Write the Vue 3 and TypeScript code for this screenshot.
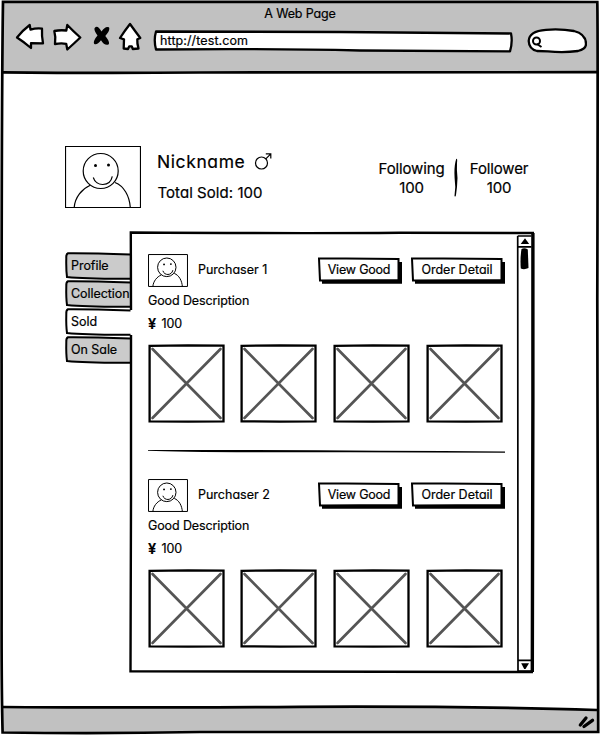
<script setup lang="ts">
interface Tab {
  label: string
  active: boolean
}

interface Purchase {
  id: number
  name: string
  description: string
  price: number
}

const tabs: Tab[] = [
  { label: 'Profile', active: false },
  { label: 'Collection', active: false },
  { label: 'Sold', active: true },
  { label: 'On Sale', active: false },
]

const purchases: Purchase[] = [
  { id: 1, name: 'Purchaser 1', description: 'Good Description', price: 100 },
  { id: 2, name: 'Purchaser 2', description: 'Good Description', price: 100 },
]
</script>

<template>
  <div class="window">
    <header class="chrome">
      <div class="title">A Web Page</div>
      <div class="toolbar">
        <svg class="ink back" width="30" height="30" viewBox="15 22 30 30">
          <path d="M17 37.5 Q23 30 29.7 25 L30.5 29.6 Q36 28 42 28.6 Q41.6 36 43 43.3 L31 43.2 L31 48 Q24 42 17 37.5Z" />
        </svg>
        <svg class="ink forward" width="30" height="30" viewBox="52 22 30 30">
          <path d="M54.3 31 Q60 29.8 66.3 30.5 L67.3 25 Q73 31 80.3 37.5 Q74 43.5 67.3 49.5 L66.2 43.8 Q61 43 55 44 Q56 37 54.3 31Z" />
        </svg>
        <svg class="stop" width="18" height="22" viewBox="93 25 18 22">
          <path d="M94.700 28 Q97.500 24.500 101.500 31.500 Q105.500 25.500 109 27.300 Q110.500 30.500 105.300 36 Q110.500 42.500 108.500 44.500 Q104.500 46 101 40.300 Q97 45.500 94.300 44 Q92.500 41.500 97.500 35.500 Q93.500 30 94.700 28Z" />
        </svg>
        <svg class="ink home" width="24" height="30" viewBox="118 22 24 30">
          <path d="M130 24 Q135 31 140.300 38 L137.300 39.300 Q137 43 138.500 48.500 L132.800 49 L131.800 46.300 H129.300 L128 49 L123.700 48.500 L124 39.300 L120 38 Q124.500 31 130 24Z" />
        </svg>
        <div class="url">
          <svg class="backing" width="360" height="24" viewBox="153 29 360 24">
            <path class="outline" d="M156 31.500 Q280 31.500 340 32 Q430 32.500 511 33.500 Q512.800 42 510 51.300 Q420 51 360 50.500 Q270 48.500 156 49.500 Q153.500 40 156 31.500Z" />
          </svg>
          <span class="url-text">http://test.com</span>
        </div>
        <svg class="search" width="60" height="26" viewBox="527 28 60 26">
          <path class="outline" d="M528.700 41 Q529 31 546 29.800 Q561 28.700 574 31 Q586 34 586 44 Q586 49 578 51 Q563 53 548 51.300 L537 51 Q529 49 528.700 41Z" />
          <circle cx="536.500" cy="41" r="3.500" class="lens" />
          <path d="M537 44 L541.500 47" class="lens" />
        </svg>
      </div>
    </header>

    <main class="page">
      <section class="profile">
        <svg class="avatar large" viewBox="0 0 76 62">
          <rect x="0.500" y="0.500" width="75" height="61" />
          <circle cx="35.700" cy="25" r="17.500" />
          <path d="M28.300 31.500 C31 41 45 41 47.300 30.300" />
          <path d="M9.200 61.500 C10 51 17 43 25.200 39.300 M50 36.500 C59 40 64.500 50 65.300 61.500" />
          <circle class="eye" cx="30.500" cy="19.500" r="1.500" />
          <circle class="eye" cx="43.500" cy="19" r="1.500" />
        </svg>
        <div class="identity">
          <div class="nick">
            <span>Nickname</span>
            <svg width="18" height="18" viewBox="255 152 18 18">
              <circle cx="262.500" cy="163" r="6" />
              <path d="M266.800 158.800 L271.300 154.300 M266.800 153.800 H271.800 V158.600" />
            </svg>
          </div>
          <div class="total">Total Sold: 100</div>
        </div>
        <div class="stats">
          <div class="stat following"><span>Following</span><span class="num">100</span></div>
          <svg class="bar" width="6" height="40" viewBox="0 0 6 40">
            <path d="M3.200 1 Q4.600 0 4 5 Q3.600 12 4.500 20 Q4.200 30 3 37 Q2.500 39.500 1.500 38 Q3 29 1.600 20 Q1 10 2.400 4Z" />
          </svg>
          <div class="stat follower"><span>Follower</span><span class="num">100</span></div>
        </div>
      </section>

      <section class="content">
        <nav class="tabs">
          <div v-for="tab in tabs" :key="tab.label" class="tab" :class="{ active: tab.active }">
            <svg class="backing" width="66" height="28" viewBox="65 252 66 28">
              <path class="tab-fill" d="M66.500 255 L68 253.500 L130.500 254.500 V279 Q90 278.500 67.500 277 Q66 266 66.500 255Z" />
              <path class="tab-line" d="M130.500 254.500 Q90 253 68 253.200 Q66 254 66.300 258 Q66 270 67 277 Q85 279 130.500 278.800" />
            </svg>
            <span class="tab-text">{{ tab.label }}</span>
          </div>
        </nav>

        <div class="panel">
          <svg class="backing" width="407" height="442" viewBox="129 231 407 442">
            <path class="panel-line" d="M131 310 L130.800 232.500 Q300 233.500 400 232.800 L534 233" />
            <path class="panel-line" d="M131 335 V500 L130.500 671.300 Q330 672.500 533 672" />
          </svg>
          <div class="list">
            <template v-for="(item, index) in purchases" :key="item.id">
              <svg v-if="index > 0" class="rule" width="357" height="56" viewBox="148 423 357 56">
                <path d="M148 450 L250 450 Q380 450.500 505 451.600 V452.800 L350 452.300 Q190 452.500 148 450.700Z" />
              </svg>
              <article class="entry">
                <div class="entry-head">
                  <svg class="avatar small" viewBox="0 0 76 62" preserveAspectRatio="none">
                    <rect x="1" y="1" width="74" height="60" />
                    <circle cx="35.700" cy="25" r="17.500" />
                    <path d="M28.300 31.500 C31 41 45 41 47.300 30.300" />
                    <path d="M9.200 61.500 C10 51 17 43 25.200 39.300 M50 36.500 C59 40 64.500 50 65.300 61.500" />
                    <circle class="eye" cx="30.500" cy="19.500" r="1.800" />
                    <circle class="eye" cx="43.500" cy="19" r="1.800" />
                  </svg>
                  <span class="name">{{ item.name }}</span>
                  <button class="btn view" type="button">
                    <svg class="backing" width="84" height="28" viewBox="318 257 84 28">
                      <path d="M322 262 H402 V283.700 H322Z" />
                      <path class="face" d="M319 258.600 Q360 258.200 398.500 259 L398.500 280 L320 280.500 Z" />
                    </svg>
                    <span>View Good</span>
                  </button>
                  <button class="btn order" type="button">
                    <svg class="backing" width="94" height="28" viewBox="411 257 94 28">
                      <path d="M415 262 H505 V283.700 H415Z" />
                      <path class="face" d="M412 258.600 Q460 258.200 501.500 259 L501.500 280 L413 280.500 Z" />
                    </svg>
                    <span>Order Detail</span>
                  </button>
                </div>
                <div class="description">{{ item.description }}</div>
                <div class="price"><b>¥</b><span>{{ item.price }}</span></div>
                <div class="pictures">
                  <svg v-for="n in 4" :key="n" width="77" height="79" viewBox="0 0 77 79">
                    <path class="cross" d="M4.500 5 L72.500 74 M72.500 5 L4.500 74" />
                    <path class="edge" d="M1.600 1.800 L40 1.300 L75.500 1.700 V77.300 L40 77.600 L1.600 77.300Z" />
                  </svg>
                </div>
              </article>
            </template>
          </div>
          <svg class="scrollbar" width="19" height="440" viewBox="516.500 232 19 440">
            <path class="rail" d="M533.400 233 V400 L532.800 672" />
            <path class="thin" d="M518.200 236 L518.500 671 H532 M518.200 236 H532 M518.200 246.800 H532 M518.500 660.300 H532" />
            <path d="M525.500 238.300 L529.700 244 H521.200Z" />
            <path d="M522 249 Q525 247.200 528.300 249.500 L529 268 Q525 270 521.300 268.500 Q520.500 258 522 249Z" />
            <path d="M521.700 663.300 H529.500 L526 669 H524.700Z" />
          </svg>
        </div>
      </section>
    </main>

    <footer class="status">
      <svg width="18" height="14" viewBox="577 715 18 14">
        <path d="M580.300 725 L586 718 M584 726.500 L592.500 720.300" />
      </svg>
    </footer>

    <svg class="frame" width="600" height="735" viewBox="0 0 600 735">
      <path class="gap" d="M0 707 V735 H600 V0 H0Z M3 2 L597 2.500 L598 733 L2.600 733 L1.500 600Z" />
      <path class="sheet" d="M450 706 H597 V709.500 Q530 707.500 450 706Z" />
      <path class="line" d="M3 1.800 Q300 2.300 597.300 2 Q598 30 597.300 300 Q597 600 598.200 732 Q300 732 200 732 Q100 734 2.600 732.500 Q1.500 690 1.600 620 L1.600 400 Q1.500 100 3 1.800Z" />
      <path class="line" d="M3 72.300 Q100 73.300 200 72.500 Q400 73 597 72.200" />
      <path class="line" d="M3 707 Q100 708 300 706.800 Q470 706 597 710" />
    </svg>
  </div>
</template>

<style>
body {
  margin: 0;
  background: #fff;
}
</style>

<style scoped>
.window {
  position: relative;
  display: flex;
  flex-direction: column;
  width: 600px;
  height: 735px;
  overflow: hidden;
  background: #fff;
  color: #000;
  font-family: Inter, "Noto Sans", sans-serif;
  font-feature-settings: "cv11" 1, "calt" 0;
  font-size: 12.5px;
  line-height: 14px;
  white-space: nowrap;
  -webkit-text-stroke: 0.2px #000;
}
svg {
  display: block;
  flex: none;
}
.frame {
  position: absolute;
  inset: 0;
  pointer-events: none;
}
.frame .line {
  fill: none;
  stroke: #000;
  stroke-width: 2.7;
}
.frame .gap {
  fill: #fff;
  fill-rule: evenodd;
}
.frame .sheet {
  fill: #fff;
}
.chrome {
  height: 72px;
  background: #c1c1c1;
}
.title {
  padding-top: 7px;
  letter-spacing: -0.15px;
  text-align: center;
}
.toolbar {
  display: flex;
  align-items: flex-start;
  padding: 1px 0 0 15px;
}
.ink {
  fill: #fff;
  stroke: #000;
  stroke-width: 2.3;
  stroke-linejoin: round;
}
.forward {
  margin-left: 7px;
}
.stop {
  margin: 3px 0 0 11px;
}
.home {
  margin-left: 7px;
}
.url {
  position: relative;
  width: 360px;
  margin: 7px 0 0 11px;
}
.url-text {
  position: relative;
  display: block;
  padding: 5px 0 0 7px;
  letter-spacing: 0.1px;
}
.outline {
  fill: #fff;
  stroke: #000;
  stroke-width: 2.3;
  stroke-linejoin: round;
}
.search {
  margin: 6px 0 0 14px;
}
.lens {
  fill: none;
  stroke: #000;
  stroke-width: 2;
}
.backing {
  position: absolute;
  top: 0;
  left: 0;
  overflow: visible;
}
.page {
  height: 635px;
  padding: 74px 65px 0;
  box-sizing: border-box;
}
.profile {
  display: flex;
  height: 62px;
}
.avatar {
  fill: none;
  stroke: #000;
  stroke-width: 1.2;
}
.avatar path,
.avatar rect,
.avatar circle {
  vector-effect: non-scaling-stroke;
}
.avatar .eye {
  fill: #000;
  stroke: none;
}
.large {
  width: 76px;
  height: 62px;
}
.small {
  width: 40px;
  height: 33px;
  stroke-width: 1;
}
.identity {
  width: 220px;
  padding-left: 16px;
}
.nick {
  display: flex;
  align-items: flex-start;
  gap: 9px;
  height: 18px;
  margin-top: 6px;
  font-size: 17.5px;
  line-height: 19px;
  letter-spacing: 0.6px;
}
.nick svg {
  fill: none;
  stroke: #000;
  stroke-width: 1.2;
}
.total {
  margin-top: 14px;
  padding-left: 0.5px;
  font-size: 15px;
  line-height: 18px;
  letter-spacing: 0.05px;
}
.stats {
  display: flex;
  font-size: 15px;
  line-height: 19px;
}
.stat {
  display: flex;
  flex-direction: column;
  align-items: center;
  padding-top: 13px;
  letter-spacing: -0.15px;
}
.following {
  width: 68px;
  padding-left: 1px;
  box-sizing: border-box;
}
.follower {
  width: 60px;
  padding-left: 2px;
  box-sizing: border-box;
}
.bar {
  margin: 12px 9px 0 8px;
}
.content {
  display: flex;
  margin-top: 24px;
}
.tabs {
  width: 64px;
  padding-top: 20px;
}
.tab {
  position: relative;
  height: 28px;
}
.tab-fill {
  fill: #cbcbcb;
}
.active .tab-fill {
  fill: #fff;
}
.tab-line {
  fill: none;
  stroke: #000;
  stroke-width: 2;
}
.tab-text {
  position: relative;
  display: block;
  padding: 7px 0 0 6px;
  letter-spacing: -0.05px;
}
.panel {
  position: relative;
  display: flex;
  width: 406px;
  height: 440px;
}
.panel > .backing {
  top: -1px;
}
.panel-line {
  fill: none;
  stroke: #000;
  stroke-width: 2.4;
}
.list {
  position: relative;
  width: 357px;
  padding: 22px 10.5px 0 19px;
}
.scrollbar .rail {
  fill: none;
  stroke: #000;
  stroke-width: 3.4;
}
.scrollbar .thin {
  fill: none;
  stroke: #000;
  stroke-width: 1.7;
}
.entry {
  height: 169px;
}
.entry-head {
  display: flex;
  height: 33px;
}
.name {
  width: 120px;
  padding: 9px 0 0 10px;
  box-sizing: content-box;
  width: 120px;
}
.btn {
  position: relative;
  height: 28px;
  margin: 3px 0 0;
  padding: 0 2px 3px 0;
  border: 0;
  background: none;
  color: #000;
  font: inherit;
  font-feature-settings: inherit;
}
.btn span {
  position: relative;
}
.view {
  width: 84px;
  letter-spacing: -0.2px;
}
.order {
  width: 94px;
  margin-left: 9px;
}
.face {
  fill: #fff;
  stroke: #000;
  stroke-width: 2;
}
.description {
  margin-top: 7px;
  letter-spacing: -0.12px;
}
.price {
  display: flex;
  margin-top: 9px;
  letter-spacing: -0.1px;
}
.price b {
  width: 13.5px;
  font-size: 14.5px;
  font-weight: 600;
}
.pictures {
  display: flex;
  justify-content: space-between;
  width: 355px;
  margin-top: 13px;
}
.pictures svg:nth-child(2) {
  margin-right: 0.9px;
  margin-left: -0.9px;
}
.edge {
  fill: none;
  stroke: #000;
  stroke-width: 2.3;
}
.cross {
  stroke: #555;
  stroke-width: 2.7;
  stroke-linecap: round;
}
.status {
  display: flex;
  justify-content: flex-end;
  height: 28px;
  padding: 8px 5px 0 0;
  box-sizing: border-box;
  background: #c1c1c1;
}
.status path {
  stroke: #000;
  stroke-width: 3.3;
  stroke-linecap: round;
}
</style>
